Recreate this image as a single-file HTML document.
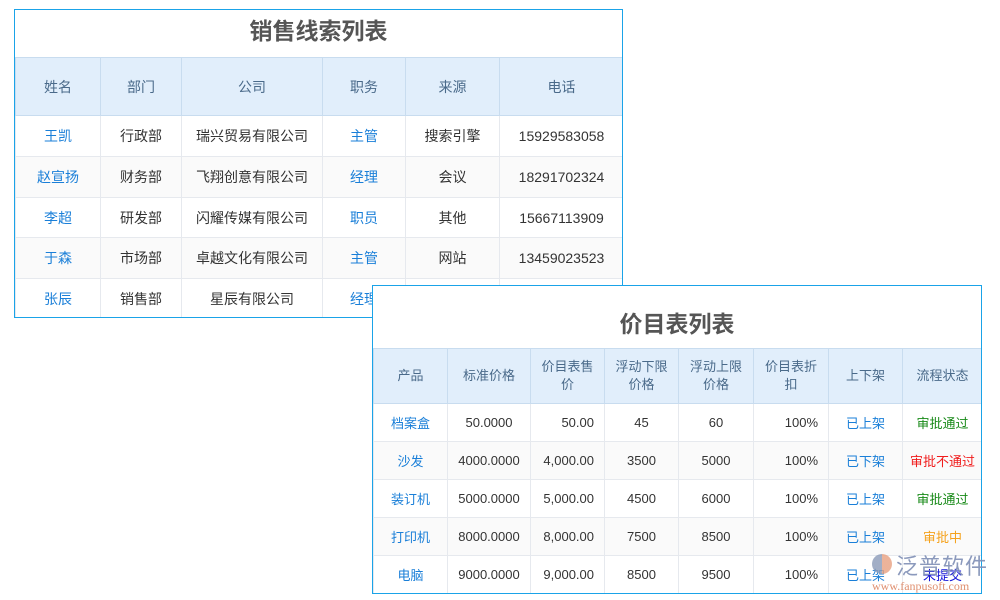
<!DOCTYPE html>
<html><head><meta charset="utf-8"><style>
body{margin:0;width:1000px;height:600px;background:#fff;position:relative;overflow:hidden;font-family:"Liberation Sans","Noto Sans CJK SC",sans-serif;font-size:13px;color:#333}
.box{position:absolute;border:1px solid #1aa3e8;background:#fff;box-sizing:border-box;overflow:hidden}
.title{text-align:center;font-weight:bold;color:#555;font-size:23px}
table{border-collapse:collapse;table-layout:fixed;position:absolute;left:0}
td{border:1px solid #e6e9ee;text-align:center;padding:0;overflow:hidden;white-space:nowrap}
tr.h td{background:#e1eefb;color:#4a6a8a;border-color:#c8dcef;white-space:normal;line-height:18px}
tr:nth-child(odd):not(.h) td{background:#fafafa}
.t1 td{font-size:14px}
.t2 td{font-size:13px}
.b{color:#1a7fd8}.g{color:#188a18}.r{color:#f01c1c}.o{color:#f5a21c}.nb{color:#1515d8}
.rt{text-align:right;padding-right:10px}
</style></head><body>
<div class="box" style="left:14px;top:9px;width:609px;height:309px">
<div class="title" style="height:48px;line-height:42px">销售线索列表</div>
<table class="t1" style="top:47px;width:608px">
<colgroup><col style="width:85px"><col style="width:81px"><col style="width:141px"><col style="width:83px"><col style="width:94px"><col style="width:124px"></colgroup>
<tr class="h" style="height:58px"><td>姓名</td><td>部门</td><td>公司</td><td>职务</td><td>来源</td><td>电话</td></tr>
<tr style="height:41px"><td class="b">王凯</td><td>行政部</td><td>瑞兴贸易有限公司</td><td class="b">主管</td><td>搜索引擎</td><td>15929583058</td></tr>
<tr style="height:41px"><td class="b">赵宣扬</td><td>财务部</td><td>飞翔创意有限公司</td><td class="b">经理</td><td>会议</td><td>18291702324</td></tr>
<tr style="height:40px"><td class="b">李超</td><td>研发部</td><td>闪耀传媒有限公司</td><td class="b">职员</td><td>其他</td><td>15667113909</td></tr>
<tr style="height:41px"><td class="b">于森</td><td>市场部</td><td>卓越文化有限公司</td><td class="b">主管</td><td>网站</td><td>13459023523</td></tr>
<tr style="height:40px"><td class="b">张辰</td><td>销售部</td><td>星辰有限公司</td><td class="b">经理</td><td></td><td></td></tr>
</table></div>
<div class="box" style="left:372px;top:285px;width:610px;height:309px">
<div class="title" style="height:63px;line-height:76px">价目表列表</div>
<table class="t2" style="top:62px;width:609px">
<colgroup><col style="width:74px"><col style="width:83px"><col style="width:74px"><col style="width:74px"><col style="width:75px"><col style="width:75px"><col style="width:74px"><col style="width:80px"></colgroup>
<tr class="h" style="height:55px"><td>产品</td><td>标准价格</td><td>价目表售<br>价</td><td>浮动下限<br>价格</td><td>浮动上限<br>价格</td><td>价目表折<br>扣</td><td>上下架</td><td>流程状态</td></tr>
<tr style="height:38px"><td class="b">档案盒</td><td>50.0000</td><td class="rt">50.00</td><td>45</td><td>60</td><td class="rt">100%</td><td class="b">已上架</td><td class="g">审批通过</td></tr>
<tr style="height:38px"><td class="b">沙发</td><td>4000.0000</td><td class="rt">4,000.00</td><td>3500</td><td>5000</td><td class="rt">100%</td><td class="b">已下架</td><td class="r">审批不通过</td></tr>
<tr style="height:38px"><td class="b">装订机</td><td>5000.0000</td><td class="rt">5,000.00</td><td>4500</td><td>6000</td><td class="rt">100%</td><td class="b">已上架</td><td class="g">审批通过</td></tr>
<tr style="height:38px"><td class="b">打印机</td><td>8000.0000</td><td class="rt">8,000.00</td><td>7500</td><td>8500</td><td class="rt">100%</td><td class="b">已上架</td><td class="o">审批中</td></tr>
<tr style="height:38px"><td class="b">电脑</td><td>9000.0000</td><td class="rt">9,000.00</td><td>8500</td><td>9500</td><td class="rt">100%</td><td class="b">已上架</td><td class="nb">未提交</td></tr>
</table></div>
<div style="position:absolute;left:872px;top:554px;width:20px;height:20px;border-radius:50%;background:conic-gradient(#e8a080 0 50%,#8a9ab8 50% 100%);opacity:.8"></div>
<div style="position:absolute;left:896px;top:549px;font-size:22px;color:#7f8fb5;letter-spacing:1px;opacity:.9">泛普软件</div>
<div style="position:absolute;left:872px;top:579px;font-family:'Liberation Serif',serif;font-size:12px;color:#e09070">www.fanpusoft.com</div>
</body></html>
